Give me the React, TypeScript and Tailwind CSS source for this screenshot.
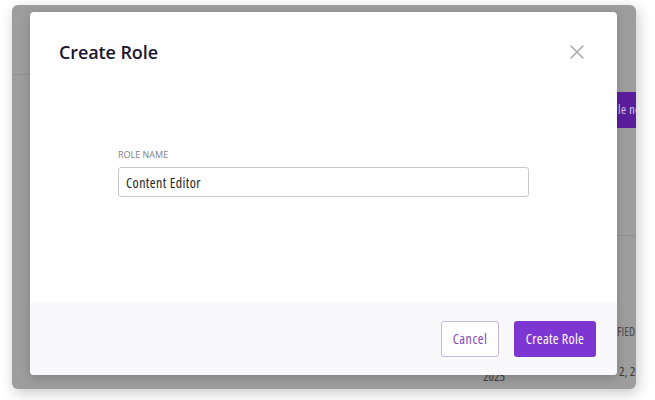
import React from "react";

export default function App() {
  const font = { fontFamily: '"Open Sans", "Noto Sans", sans-serif' };
  return (
    <div className="w-[655px] h-[400px] bg-white pt-[5px] pl-[12px]" style={font}>
      <div className="relative w-[624px] h-[384px] rounded-[6px] bg-[#9d9d9d] overflow-hidden shadow-[2px_4px_14px_rgba(0,0,0,0.22)]">
        {/* background app content (dimmed) */}
        <div className="absolute left-0 top-[69px] w-[20px] h-px bg-[#8f8f8f]" />
        <div className="absolute left-[600px] top-[230px] w-[24px] h-px bg-[#8f8f8f]" />
        <div className="absolute left-[590px] top-[87px] w-[34px] h-[36px] bg-[#5a1e9c] flex items-center pl-[16px]">
          <span className="text-[12px] text-[#d9cfe6] whitespace-nowrap font-stretch-condensed tracking-[0.5px]">le new</span>
        </div>
        <div className="absolute left-[605px] top-[318px] text-[12px] text-[#4a4a4a] whitespace-nowrap font-stretch-condensed">FIED</div>
        <div className="absolute left-[607px] top-[357px] text-[13px] text-[#3a3a3a] whitespace-nowrap font-stretch-condensed">2, 2025</div>
        <div className="absolute left-[471px] top-[362px] text-[13px] text-[#3a3a3a] whitespace-nowrap font-stretch-condensed">2025</div>

        {/* modal */}
        <div className="absolute left-[18px] top-[7px] w-[587px] h-[363px] rounded-[4px] bg-white flex flex-col overflow-hidden shadow-[0_3px_10px_rgba(0,0,0,0.18)]">
          <div className="flex-1 flex flex-col">
            <div className="flex items-start justify-between pl-[29px] pr-[32px] pt-[27px]">
              <h2 className="text-[18px] leading-[26px] font-semibold text-[#1b1532] tracking-[-0.1px]">Create Role</h2>
              <svg width="16" height="16" viewBox="0 0 16 16" className="mt-[5px]" fill="none" stroke="#a9a9ae" strokeWidth="1.6" strokeLinecap="round">
                <path d="M2 2 L14 14 M14 2 L2 14" />
              </svg>
            </div>
            <div className="pl-[88px] pt-[83px]">
              <div className="text-[9px] leading-[14px] text-[#7f7f84]">ROLE NAME</div>
              <div className="mt-[5px] w-[411px] h-[30px] rounded-[3px] border border-[#c8c8cc] flex items-center pl-[7px]">
                <span className="text-[14px] text-[#1f1f26] font-medium font-stretch-condensed tracking-[0.4px]">Content Editor</span>
              </div>
            </div>
          </div>
          <div className="h-[73px] bg-[#f9f9fb] flex items-center justify-end pr-[21px] gap-[15px]">
            <button className="w-[58px] h-[36px] rounded-[3px] border border-[#c6b6d8] bg-white text-[14px] text-[#8346bd] font-medium font-stretch-condensed tracking-[0.5px]">Cancel</button>
            <button className="w-[82px] h-[36px] rounded-[3px] bg-[#7e36d2] text-[14px] text-white font-medium font-stretch-condensed tracking-[0.3px]">Create Role</button>
          </div>
        </div>
      </div>
    </div>
  );
}
